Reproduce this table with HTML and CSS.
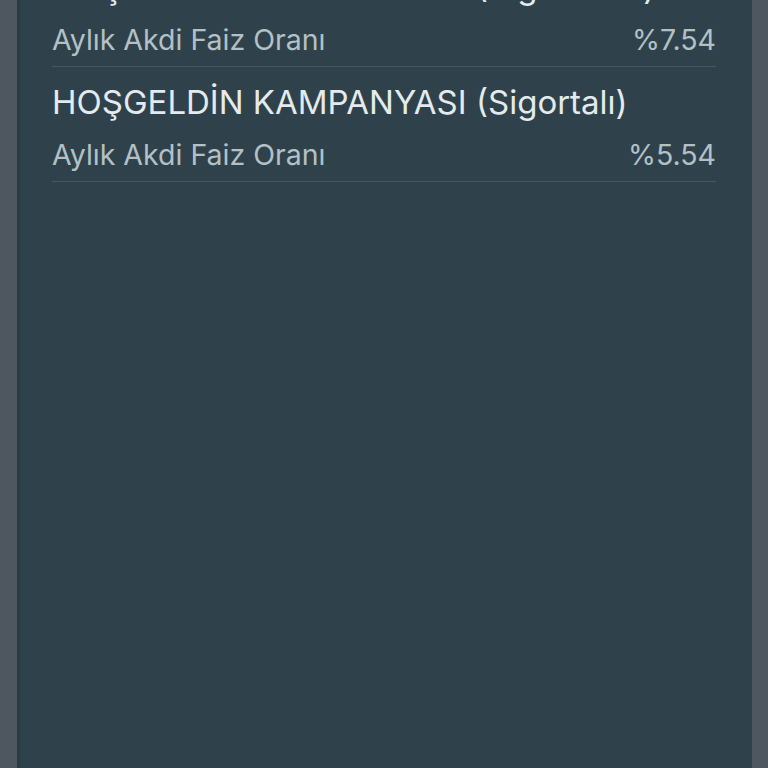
FILE: index.html
```html
<!DOCTYPE html>
<html lang="tr">
<head>
  <meta charset="UTF-8">
  <meta name="viewport" content="width=device-width, initial-scale=1.0">
  <title>Faiz Oranları</title>
  <link rel="stylesheet" href="styles.css">
</head>
<body>
  <div id="panel">
    <div id="rate-list">
      <div class="rate-row">
        <div class="rate-title">HOŞGELDİN KAMPANYASI (Sigortasız)</div>
        <div class="rate-line">
          <span>Aylık Akdi Faiz Oranı</span>
          <span>%7.54</span>
        </div>
      </div>
      <div class="rate-row">
        <div class="rate-title">HOŞGELDİN KAMPANYASI (Sigortalı)</div>
        <div class="rate-line">
          <span>Aylık Akdi Faiz Oranı</span>
          <span>%5.54</span>
        </div>
      </div>
    </div>
  </div>
</body>
</html>
```

FILE: styles.css
```css
html, body {
  height: 100%;
}

body {
  margin: 0;
  padding: 0 16px 0 17px;
  background-color: #4e5660;
  font-family: Inter, 'Noto Sans', sans-serif;
  overflow: hidden;
  box-sizing: border-box;
}

#panel {
  height: 100%;
  background-color: #2f424b;
  border-left: 3px solid #2b3b43;
  padding: 0 36px 0 32px;
  overflow: hidden;
}

#rate-list {
  margin-top: -48px;
}

.rate-row {
  padding: 15px 0 6px;
  border-bottom: 1px solid #46585f;
}

.rate-title {
  color: #e4eaed;
  font-size: 33px;
  line-height: 40px;
  white-space: nowrap;
}

.rate-line {
  display: flex;
  justify-content: space-between;
  margin-top: 13px;
  color: #b3c0c6;
  font-size: 28.5px;
  line-height: 40px;
}
```
